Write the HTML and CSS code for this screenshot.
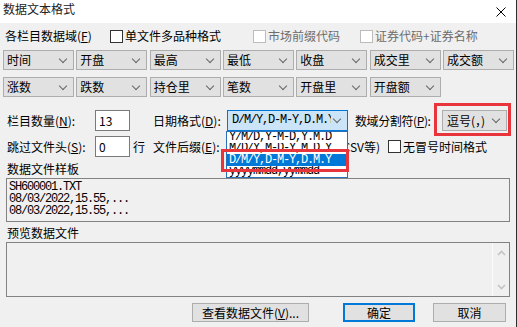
FILE: index.html
```html
<!DOCTYPE html>
<html lang="zh-CN">
<head>
  <meta charset="UTF-8">
  <title>数据文本格式</title>
  <link rel="stylesheet" href="styles.css">
</head>
<body>

<div class="dialog">
  <div class="titlebar">
    <span class="title">数据文本格式</span>
    <svg class="close" width="10" height="10" viewBox="0 0 10 10"><path d="M0.5 0.5L9.5 9.5M9.5 0.5L0.5 9.5" stroke="#000" stroke-width="1" fill="none"/></svg>
  </div>

  <div class="opts">
    <span class="opt-label">各栏目数据域(<u>F</u>)</span>
    <label class="check opt-multi"><span class="box"></span>单文件多品种格式</label>
    <label class="check opt-prefix disabled"><span class="box"></span>市场前缀代码</label>
    <label class="check disabled"><span class="box"></span>证券代码+证券名称</label>
  </div>

  <div class="fields">
    <div class="combo">时间</div>
    <div class="combo">开盘</div>
    <div class="combo">最高</div>
    <div class="combo">最低</div>
    <div class="combo">收盘</div>
    <div class="combo">成交里</div>
    <div class="combo">成交额</div>
    <div class="combo">涨数</div>
    <div class="combo">跌数</div>
    <div class="combo">持仓里</div>
    <div class="combo">笔数</div>
    <div class="combo">开盘里</div>
    <div class="combo">开盘额</div>
  </div>

  <div class="param-row first">
    <span class="lbl-a">栏目数量(<u>N</u>):</span>
    <span class="edit">13</span>
    <span class="unit"></span>
    <span class="lbl-b">日期格式(<u>D</u>):</span>
    <div class="combo date"><span class="val">D/M/Y,D-M-Y,D.M.Y</span></div>
    <span class="lbl-c">数域分割符(<u>P</u>):</span>
    <div class="combo sep">逗号(，)</div>
  </div>

  <div class="param-row">
    <span class="lbl-a">跳过文件头(<u>S</u>):</span>
    <span class="edit">0</span>
    <span class="unit">行</span>
    <span class="lbl-b">文件后缀(<u>E</u>):</span>
    <span class="suffix-note">(如TXT,CSV等)</span>
    <label class="check nocolon"><span class="box"></span>无冒号时间格式</label>
  </div>

  <div class="group-title">数据文件样板</div>
  <div class="sample">
    <div>SH600001.TXT</div>
    <div>08/03/2022,15.55,...</div>
    <div>08/03/2022,15.55,...</div>
  </div>

  <div class="group-title second">预览数据文件</div>
  <div class="preview">
    <div class="scrollbar">
      <svg width="9" height="6" viewBox="0 0 9 6"><path d="M1 5L4.5 1.5L8 5" stroke="#c4c4c4" stroke-width="1.6" fill="none"/></svg>
      <svg width="9" height="6" viewBox="0 0 9 6"><path d="M1 1L4.5 4.5L8 1" stroke="#c4c4c4" stroke-width="1.6" fill="none"/></svg>
    </div>
  </div>

  <div class="buttons">
    <button class="btn view">查看数据文件(<u>V</u>)...</button>
    <button class="btn ok">确定</button>
    <button class="btn cancel">取消</button>
  </div>

  <!-- open date format list -->
  <div class="droplist">
    <div class="item">Y/M/D,Y-M-D,Y.M.D</div>
    <div class="item">M/D/Y,M-D-Y,M.D.Y</div>
    <div class="item selected">D/M/Y,D-M-Y,D.M.Y</div>
    <div class="item">yyyymmdd,yymmdd</div>
  </div>

  <div class="mark mark-list"></div>
  <div class="mark mark-sep"></div>
</div>

</body>
</html>
```

FILE: styles.css
```css
* {
  box-sizing: border-box;
}
html, body {
  margin: 0;
  overflow: hidden;
}
body {
  font-family: "Noto Sans CJK SC", "Microsoft YaHei", sans-serif;
  font-size: 12px;
  color: #000;
  background: #f0f0f0;
}
u {
  text-decoration-thickness: 1px;
  text-underline-offset: 1px;
}
.dialog {
  position: relative;
  width: 517px;
  height: 327px;
  background: #f0f0f0;
  border-right: 1px solid #2e2e2e;
  overflow: hidden;
}
.titlebar {
  height: 23px;
  background: #fff;
  display: flex;
  justify-content: space-between;
  align-items: flex-start;
  padding: 0 10px 0 3px;
}
.title {
  line-height: 18px;
  color: #222;
}
.close {
  margin-top: 7px;
}

/* options row */
.opts {
  display: flex;
  align-items: center;
  height: 18px;
  line-height: 18px;
  margin-top: 4px;
  padding-left: 5px;
}
.opt-label {
  width: 105px;
}
.check {
  display: flex;
  align-items: center;
  gap: 2px;
  white-space: nowrap;
}
.box {
  width: 13px;
  height: 13px;
  border: 1px solid #333;
  background: #fff;
}
.opt-multi {
  width: 143px;
}
.opt-prefix {
  width: 107px;
}
.disabled {
  color: #6d6d6d;
}
.disabled .box {
  border-color: #bcbcbc;
}

/* field combos */
.fields {
  display: grid;
  grid-template-columns: repeat(7, 71px);
  column-gap: 2.33px;
  row-gap: 7px;
  margin-top: 5px;
  padding-left: 3px;
}
.combo {
  position: relative;
  height: 20px;
  border: 1px solid #adadad;
  background: #e1e1e1;
  padding-left: 3px;
  line-height: 18px;
  white-space: nowrap;
  overflow: hidden;
}
.combo::after {
  content: "";
  position: absolute;
  right: 7px;
  top: 5px;
  width: 5px;
  height: 5px;
  border-right: 1px solid #666;
  border-bottom: 1px solid #666;
  transform: rotate(45deg);
}

/* parameter rows */
.param-row {
  display: flex;
  align-items: center;
  height: 21px;
  line-height: 21px;
  margin-top: 5px;
  padding-left: 7px;
  white-space: nowrap;
}
.param-row.first {
  margin-top: 13px;
}
.lbl-a {
  width: 88px;
}
.edit {
  width: 35px;
  height: 21px;
  background: #fff;
  border: 1px solid #7a7a7a;
  padding-left: 3px;
  line-height: 19px;
}
.unit {
  width: 23px;
  padding-left: 3px;
}
.lbl-b {
  width: 74px;
}
.lbl-c {
  width: 87px;
  margin-left: 7px;
  letter-spacing: -0.4px;
  flex-shrink: 0;
}
.param-row .combo {
  height: 21px;
  line-height: 19px;
}
.combo.date {
  width: 121px;
  background: #cce4f7;
  border-color: #0078d7;
  padding-left: 4px;
}
.combo.date .val {
  display: block;
  width: 99px;
  overflow: hidden;
  font-family: "Liberation Mono", monospace;
  letter-spacing: -1.2px;
}
.combo.sep {
  width: 65px;
  padding-left: 4px;
}
.suffix-note {
  width: 153px;
  text-align: right;
  overflow: hidden;
}
.nocolon {
  margin-left: 8px;
}

/* sample / preview boxes */
.group-title {
  height: 18px;
  line-height: 18px;
  margin-top: 3px;
  padding-left: 7px;
}
.group-title.second {
  margin-top: 2px;
}
.sample {
  height: 44px;
  margin: 0 6px;
  border: 1px solid #828282;
  padding: 2px 0 0 2px;
  font-family: "Liberation Mono", monospace;
  letter-spacing: -1.2px;
  line-height: 12px;
}
.preview {
  height: 55px;
  margin: 0 6px;
  border: 1px solid #828282;
  display: flex;
  justify-content: flex-end;
}
.scrollbar {
  width: 17px;
  border-left: 1px solid #fbfbfb;
  display: flex;
  flex-direction: column;
  justify-content: space-between;
  align-items: center;
  padding: 7px 0 6px;
}

/* buttons */
.buttons {
  display: flex;
  justify-content: flex-end;
  margin-top: 6px;
  padding-right: 10px;
}
.btn {
  height: 19px;
  padding: 0;
  font: inherit;
  line-height: 17px;
  color: #000;
  background: #e1e1e1;
  border: 1px solid #adadad;
}
.btn.view {
  width: 117px;
  margin-right: 34px;
}
.btn.ok {
  width: 72px;
  margin-right: 18px;
  border: 2px solid #0078d7;
  line-height: 15px;
}
.btn.cancel {
  width: 73px;
}

/* open drop-down list over the form */
.droplist {
  position: absolute;
  left: 226px;
  top: 131px;
  width: 122px;
  height: 47px;
  background: #fff;
  border: 1px solid #2a6fb8;
  font-family: "Liberation Mono", monospace;
  letter-spacing: -1.2px;
}
.item {
  height: 11px;
  line-height: 11px;
  padding-left: 2px;
  overflow: hidden;
  white-space: nowrap;
}
.item.selected {
  height: 12px;
  line-height: 12px;
  background: #0078d7;
  color: #fff;
}

/* red annotation frames */
.mark {
  position: absolute;
  border: 3px solid #e8353b;
}
.mark-list {
  left: 221px;
  top: 149px;
  width: 128px;
  height: 23px;
}
.mark-sep {
  left: 434px;
  top: 103px;
  width: 77px;
  height: 33px;
}
```
